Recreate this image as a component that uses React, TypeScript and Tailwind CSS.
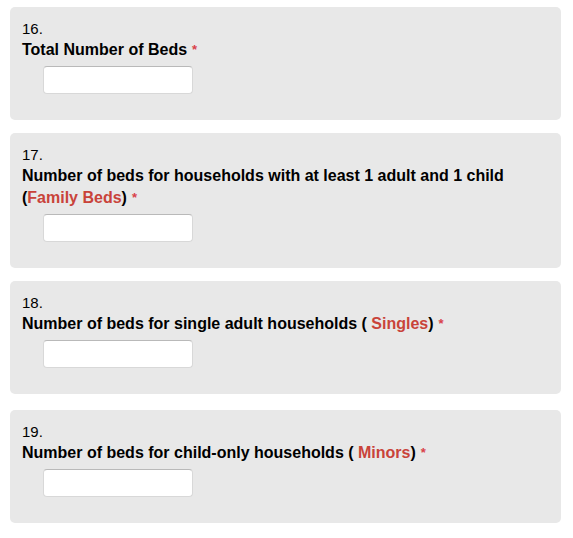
import React from "react";

type Q = { num: string; label: React.ReactNode; extraTop?: boolean };

const Red = ({ children }: { children: React.ReactNode }) => (
  <span className="text-[#c9433a]">{children}</span>
);

const Star = () => (
  <span className="ml-[5px] text-[13px] leading-none text-[#d9414a] relative -top-[1px]">*</span>
);

const questions: Q[] = [
  { num: "16.", label: <>Total Number of Beds<Star /></> },
  {
    num: "17.",
    label: (
      <>
        Number of beds for households with at least 1 adult and 1 child
        <br />(<Red>Family Beds</Red>)<Star />
      </>
    ),
  },
  {
    num: "18.",
    label: (
      <>
        Number of beds for single adult households ( <Red>Singles</Red>)<Star />
      </>
    ),
  },
  {
    num: "19.",
    extraTop: true,
    label: (
      <>
        Number of beds for child-only households ( <Red>Minors</Red>)<Star />
      </>
    ),
  },
];

export default function App() {
  return (
    <div
      className="bg-white w-[573px] min-h-[538px] pl-[10px] pr-[12px] pt-[7px] flex flex-col gap-[13px] text-black"
      style={{ fontFamily: '"Liberation Sans", Arial, Helvetica, sans-serif' }}
    >
      {questions.map((q) => (
        <div
          key={q.num}
          className={
            q.extraTop
              ? "mt-[3px] bg-[#e8e8e8] rounded-[5px] pt-[12px] pb-[26px] pl-[12px] pr-[12px]"
              : "bg-[#e8e8e8] rounded-[5px] pt-[12px] pb-[26px] pl-[12px] pr-[12px]"
          }
        >
          <div className="text-[15px] leading-[20px]">{q.num}</div>
          <div className="text-[16px] leading-[22px] font-bold">{q.label}</div>
          <input
            type="text"
            className="block mt-[5px] ml-[21px] w-[150px] h-[28px] bg-white rounded-[4px] border border-[#d8d8d8] border-t-[#b9b9b9] outline-none"
          />
        </div>
      ))}
    </div>
  );
}
